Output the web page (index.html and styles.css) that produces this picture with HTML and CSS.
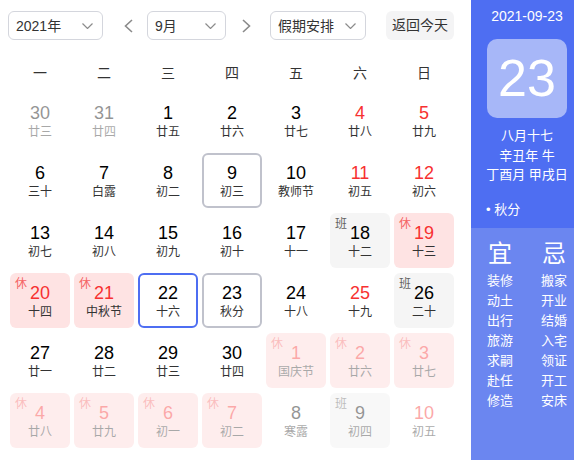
FILE: index.html
```html
<!DOCTYPE html>
<html lang="zh-CN">
<head>
<meta charset="utf-8">
<title>万年历</title>
<link rel="stylesheet" href="styles.css">
</head>
<body>
<div class="app">
  <div class="main">
    <div class="toolbar">
      <div class="select sel-year"><span>2021年</span><svg class="caret" width="11" height="6" viewBox="0 0 11 6"><polyline points="0.5,0.5 5.5,5.5 10.5,0.5" fill="none" stroke="#8c8c8c" stroke-width="1.2"/></svg></div>
      <div class="arrow arrow-prev"><svg width="9" height="14" viewBox="0 0 9 14"><polyline points="8,1 1.5,7 8,13" fill="none" stroke="#8a8a8a" stroke-width="1.6"/></svg></div>
      <div class="select sel-month"><span>9月</span><svg class="caret" width="11" height="6" viewBox="0 0 11 6"><polyline points="0.5,0.5 5.5,5.5 10.5,0.5" fill="none" stroke="#8c8c8c" stroke-width="1.2"/></svg></div>
      <div class="arrow arrow-next"><svg width="9" height="14" viewBox="0 0 9 14"><polyline points="1,1 7.5,7 1,13" fill="none" stroke="#8a8a8a" stroke-width="1.6"/></svg></div>
      <div class="select sel-holiday"><span>假期安排</span><svg class="caret" width="11" height="6" viewBox="0 0 11 6"><polyline points="0.5,0.5 5.5,5.5 10.5,0.5" fill="none" stroke="#8c8c8c" stroke-width="1.2"/></svg></div>
      <div class="today-btn">返回今天</div>
    </div>
    <div class="weekdays">
      <span>一</span><span>二</span><span>三</span><span>四</span><span>五</span><span>六</span><span>日</span>
    </div>
    <div class="grid">
      <div class="cell other"><div class="num">30</div><div class="lunar">廿三</div></div>
      <div class="cell other"><div class="num">31</div><div class="lunar">廿四</div></div>
      <div class="cell"><div class="num">1</div><div class="lunar">廿五</div></div>
      <div class="cell"><div class="num">2</div><div class="lunar">廿六</div></div>
      <div class="cell"><div class="num">3</div><div class="lunar">廿七</div></div>
      <div class="cell red"><div class="num">4</div><div class="lunar">廿八</div></div>
      <div class="cell red"><div class="num">5</div><div class="lunar">廿九</div></div>

      <div class="cell"><div class="num">6</div><div class="lunar">三十</div></div>
      <div class="cell"><div class="num">7</div><div class="lunar">白露</div></div>
      <div class="cell"><div class="num">8</div><div class="lunar">初二</div></div>
      <div class="cell marked"><div class="num">9</div><div class="lunar">初三</div></div>
      <div class="cell"><div class="num">10</div><div class="lunar">教师节</div></div>
      <div class="cell red"><div class="num">11</div><div class="lunar">初五</div></div>
      <div class="cell red"><div class="num">12</div><div class="lunar">初六</div></div>

      <div class="cell"><div class="num">13</div><div class="lunar">初七</div></div>
      <div class="cell"><div class="num">14</div><div class="lunar">初八</div></div>
      <div class="cell"><div class="num">15</div><div class="lunar">初九</div></div>
      <div class="cell"><div class="num">16</div><div class="lunar">初十</div></div>
      <div class="cell"><div class="num">17</div><div class="lunar">十一</div></div>
      <div class="cell work"><span class="badge">班</span><div class="num">18</div><div class="lunar">十二</div></div>
      <div class="cell rest red"><span class="badge">休</span><div class="num">19</div><div class="lunar">十三</div></div>

      <div class="cell rest red"><span class="badge">休</span><div class="num">20</div><div class="lunar">十四</div></div>
      <div class="cell rest red"><span class="badge">休</span><div class="num">21</div><div class="lunar">中秋节</div></div>
      <div class="cell hover"><div class="num">22</div><div class="lunar">十六</div></div>
      <div class="cell marked"><div class="num">23</div><div class="lunar">秋分</div></div>
      <div class="cell"><div class="num">24</div><div class="lunar">十八</div></div>
      <div class="cell red"><div class="num">25</div><div class="lunar">十九</div></div>
      <div class="cell work"><span class="badge">班</span><div class="num">26</div><div class="lunar">二十</div></div>

      <div class="cell"><div class="num">27</div><div class="lunar">廿一</div></div>
      <div class="cell"><div class="num">28</div><div class="lunar">廿二</div></div>
      <div class="cell"><div class="num">29</div><div class="lunar">廿三</div></div>
      <div class="cell"><div class="num">30</div><div class="lunar">廿四</div></div>
      <div class="cell rest red other"><span class="badge">休</span><div class="num">1</div><div class="lunar">国庆节</div></div>
      <div class="cell rest red other"><span class="badge">休</span><div class="num">2</div><div class="lunar">廿六</div></div>
      <div class="cell rest red other"><span class="badge">休</span><div class="num">3</div><div class="lunar">廿七</div></div>

      <div class="cell rest red other"><span class="badge">休</span><div class="num">4</div><div class="lunar">廿八</div></div>
      <div class="cell rest red other"><span class="badge">休</span><div class="num">5</div><div class="lunar">廿九</div></div>
      <div class="cell rest red other"><span class="badge">休</span><div class="num">6</div><div class="lunar">初一</div></div>
      <div class="cell rest red other"><span class="badge">休</span><div class="num">7</div><div class="lunar">初二</div></div>
      <div class="cell other"><div class="num">8</div><div class="lunar">寒露</div></div>
      <div class="cell work other"><span class="badge">班</span><div class="num">9</div><div class="lunar">初四</div></div>
      <div class="cell red other"><div class="num">10</div><div class="lunar">初五</div></div>
    </div>
  </div>
  <div class="side">
    <div class="side-top">
      <div class="side-inner">
        <div class="date">2021-09-23</div>
        <div class="big-day">23</div>
        <div class="lunar-info">
          <div>八月十七</div>
          <div>辛丑年 牛</div>
          <div>丁酉月 甲戌日</div>
        </div>
      </div>
      <div class="term">• 秋分</div>
    </div>
    <div class="side-bottom">
      <div class="yiji">
        <div class="col">
          <div class="head">宜</div>
          <div>装修</div><div>动土</div><div>出行</div><div>旅游</div><div>求嗣</div><div>赴任</div><div>修造</div>
        </div>
        <div class="col">
          <div class="head">忌</div>
          <div>搬家</div><div>开业</div><div>结婚</div><div>入宅</div><div>领证</div><div>开工</div><div>安床</div>
        </div>
      </div>
    </div>
  </div>
</div>
</body>
</html>
```
FILE: styles.css
```css
html, body {
  margin: 0;
  padding: 0;
  background: #fff;
}
body {
  font-family: "Liberation Sans", "Noto Sans CJK SC", sans-serif;
  color: #333;
  overflow: hidden;
}
.app {
  display: flex;
  width: 574px;
  height: 460px;
}
.main {
  width: 471px;
  flex: none;
}
.toolbar {
  display: flex;
  align-items: center;
  margin-top: 11px;
  padding-left: 8px;
  height: 29px;
}
.select {
  box-sizing: border-box;
  height: 29px;
  border: 1px solid #d4d6dd;
  border-radius: 6px;
  display: flex;
  align-items: center;
  justify-content: space-between;
  padding: 0 9px 0 7px;
  font-size: 14px;
  line-height: 20px;
  color: #333;
}
.caret {
  display: block;
  margin-top: 1px;
}
.sel-year { width: 95px; }
.sel-month { width: 79px; margin-left: 9px; }
.sel-holiday { width: 96px; margin-left: 14px; }
.arrow {
  width: 20px;
  height: 29px;
  display: flex;
  align-items: center;
  justify-content: center;
}
.arrow svg { display: block; }
.arrow-prev { margin-left: 15px; }
.arrow-next { margin-left: 10px; }
.today-btn {
  margin-left: 20px;
  width: 68px;
  height: 29px;
  background: #f4f4f5;
  border-radius: 6px;
  font-size: 14px;
  line-height: 29px;
  text-align: center;
  color: #333;
}
.weekdays {
  display: grid;
  grid-template-columns: repeat(7, 60px);
  column-gap: 4px;
  margin-top: 13px;
  padding-left: 10px;
  height: 40px;
  font-size: 14px;
  line-height: 40px;
  text-align: center;
  color: #333;
}
.grid {
  display: grid;
  grid-template-columns: repeat(7, 60px);
  grid-auto-rows: 55px;
  column-gap: 4px;
  row-gap: 5px;
  padding-left: 10px;
}
.cell {
  position: relative;
  box-sizing: border-box;
  border: 2px solid transparent;
  border-radius: 6px;
  padding-top: 7px;
  text-align: center;
}
.num {
  font-size: 18px;
  line-height: 22px;
  color: #000;
}
.lunar {
  font-size: 12px;
  line-height: 16px;
  color: #333;
}
.red .num { color: #f73131; }
.rest { background: #fee3e3; }
.work { background: #f5f5f5; }
.badge {
  position: absolute;
  top: 2px;
  left: 3px;
  font-size: 12px;
  line-height: 14px;
}
.rest .badge { color: #f56464; }
.work .badge { color: #626262; }
.marked { border-color: #c0c2cc; }
.hover { border-color: #4e6ef2; }
.other { opacity: 0.42; }
.rest.other { background: #fed6d6; }
.work.other { background: #f0f0f0; }
.side {
  width: 103px;
  flex: none;
  display: flex;
  flex-direction: column;
  color: #fff;
}
.side-top {
  height: 228px;
  background: #4e6ef2;
  padding-top: 6px;
  box-sizing: border-box;
}
.side-inner {
  width: 80px;
  margin-left: 16px;
  text-align: center;
  white-space: nowrap;
}
.date {
  font-size: 14px;
  line-height: 20px;
}
.big-day {
  margin-top: 13px;
  height: 79px;
  border-radius: 10px;
  background: #a7b7f8;
  font-size: 52px;
  line-height: 79px;
}
.lunar-info {
  margin-top: 8px;
  font-size: 13px;
  line-height: 19.5px;
  display: flex;
  flex-direction: column;
  align-items: center;
}
.term {
  margin-top: 16px;
  padding-left: 15px;
  font-size: 13px;
  line-height: 18px;
  white-space: nowrap;
}
.side-bottom {
  flex: 1;
  background: #6b86f0;
  padding-top: 11px;
}
.yiji {
  display: flex;
  justify-content: space-between;
  width: 80px;
  margin-left: 16px;
}
.col {
  width: 26px;
  text-align: center;
  font-size: 13px;
  line-height: 20px;
  white-space: nowrap;
}
.col .head {
  font-size: 24px;
  line-height: 30px;
  margin-bottom: 2px;
}
```
